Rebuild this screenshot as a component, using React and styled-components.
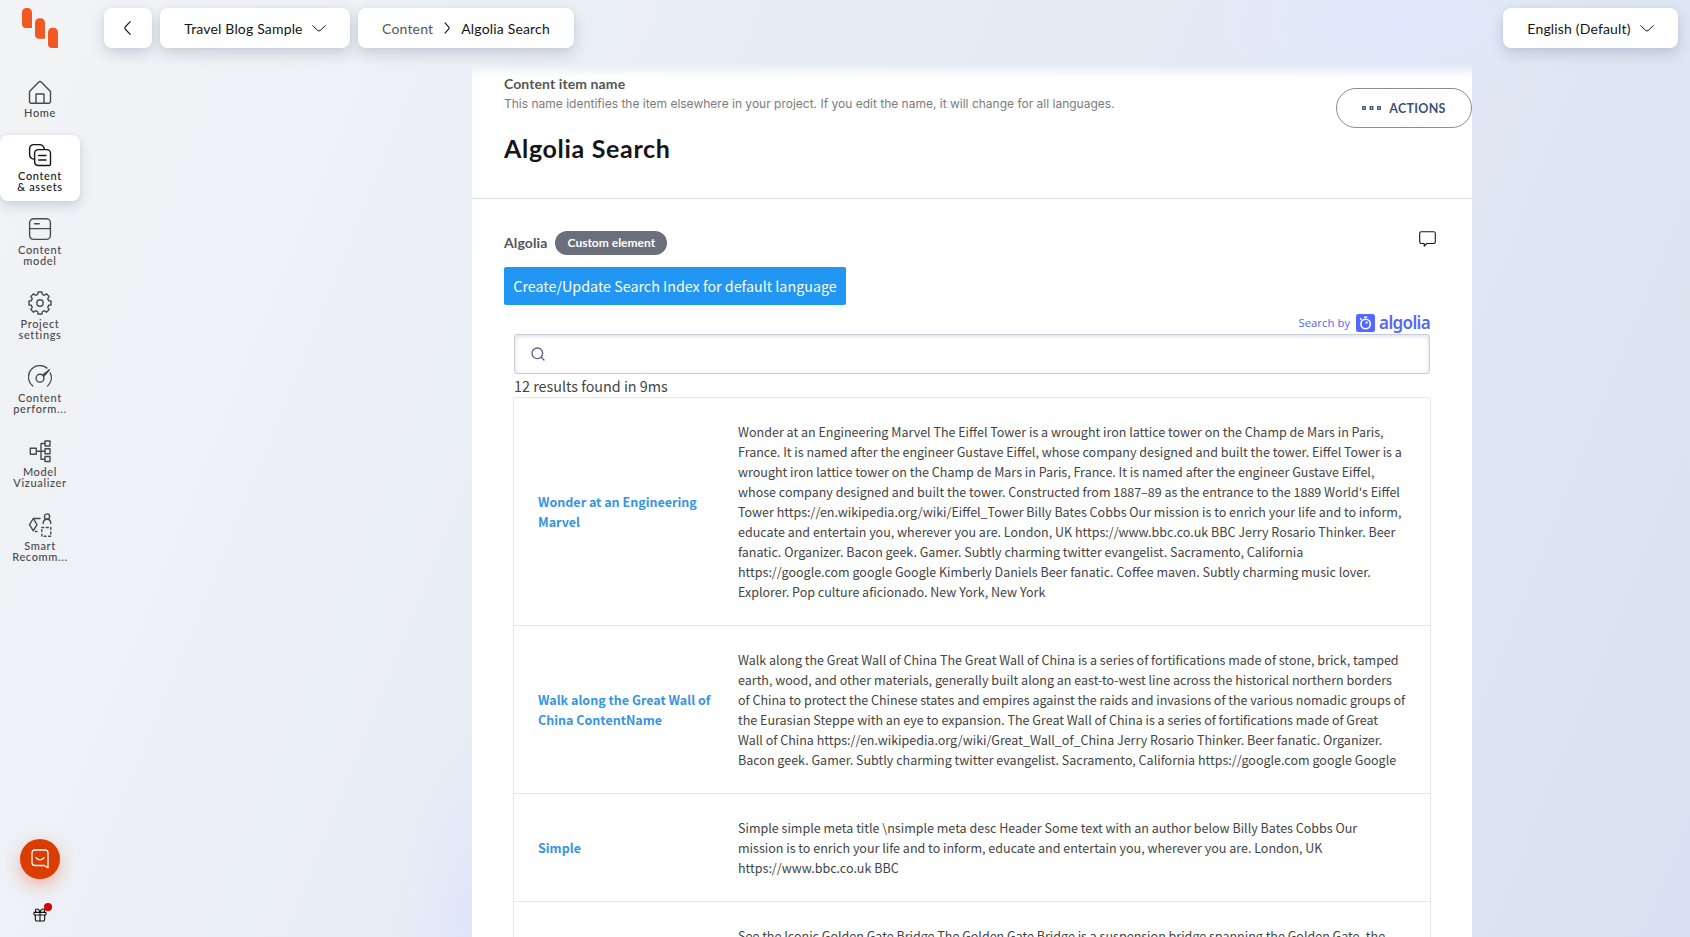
import React from "react";
import styled, { createGlobalStyle, css } from "styled-components";
import { Gift, Search } from "lucide-react";

const brand = `Lato, "Open Sans", sans-serif`;
const source = `"Noto Sans CJK SC", "Open Sans", sans-serif`;

const GlobalStyle = createGlobalStyle`
  *, *::before, *::after { box-sizing: border-box; }
  body { margin: 0; overflow: hidden; font-family: ${brand}; color: #151515; }
  button { font: inherit; color: inherit; border: 0; padding: 0; background: none; }
  h1, h2, p { margin: 0; }
  svg { display: block; flex: none; }
`;

const Page = styled.div`
  display: flex;
  height: 937px;
  overflow: hidden;
  background:
    radial-gradient(ellipse 190px 90px at 1400px 20px, rgba(223, 232, 255, 0.8), rgba(223, 232, 255, 0)),
    radial-gradient(ellipse 70px 190px at 472px 937px, rgba(219, 227, 252, 0.7), rgba(219, 227, 252, 0)),
    linear-gradient(112deg, #f2f4f6 0%, #edf0f5 20%, #e6ebf5 46%, #e1e8f4 72%, #d8e1f1 100%);
`;

/* Sidebar */
const Sidebar = styled.nav`
  display: flex;
  flex-direction: column;
  align-items: center;
  width: 80px;
  flex: none;
  padding: 8px 0 14px;
`;

const NavList = styled.div`
  display: flex;
  flex-direction: column;
  gap: 8px;
  width: 100%;
  margin-top: 24px;
`;

const NavItem = styled.a`
  display: flex;
  flex-direction: column;
  align-items: center;
  gap: 3px;
  width: 80px;
  padding: 8px 0 9px;
  border-radius: 8px;
  color: #4a4a4a;
  font-size: 11px;
  font-weight: 500;
  line-height: 11px;
  letter-spacing: 0.65px;
  text-align: center;
  white-space: pre;
  ${(p) => p.$active && css`
    color: #151515;
    background: #fff;
    box-shadow: 0 5px 12px rgba(60, 75, 110, 0.2), 0 0 3px rgba(60, 75, 110, 0.05);
  `}
`;

const ChatButton = styled.button`
  display: grid;
  place-items: center;
  width: 40px;
  height: 40px;
  margin-top: auto;
  border-radius: 50%;
  color: #fff;
  background: #db3c00;
  box-shadow: 0 6px 16px rgba(240, 90, 40, 0.38);
`;

const GiftButton = styled.button`
  position: relative;
  margin-top: 28px;
  color: #151515;
`;

const Dot = styled.span`
  position: absolute;
  top: -4px;
  right: -4px;
  width: 8px;
  height: 8px;
  border-radius: 50%;
  background: #d60000;
`;

/* Top bar */
const Main = styled.main`
  display: flex;
  flex-direction: column;
  flex: 1;
  min-width: 0;
`;

const TopBar = styled.header`
  display: flex;
  gap: 8px;
  flex: none;
  height: 64px;
  padding: 8px 12px 0 24px;
`;

const Tile = styled.button`
  display: flex;
  align-items: center;
  justify-content: center;
  width: ${(p) => p.$width}px;
  height: 40px;
  margin-left: ${(p) => (p.$end ? "auto" : 0)};
  padding-right: ${(p) => p.$nudge || 0}px;
  gap: 9px;
  border-radius: 8px;
  background: #fff;
  box-shadow: 0 6px 14px rgba(60, 75, 110, 0.2), 0 0 4px rgba(60, 75, 110, 0.05);
  font-size: 14px;
  font-weight: 400;
  letter-spacing: 0.17px;
  white-space: nowrap;
`;

const Crumb = styled.span`
  color: ${(p) => (p.$current ? "#151515" : "#555")};
`;

/* Item panel */
const Panel = styled.section`
  width: 1000px;
  flex: 1;
  margin-left: 392px;
  background: linear-gradient(to bottom, rgba(255, 255, 255, 0) 0, #fff 14px);
`;

const PanelHeader = styled.div`
  display: flex;
  justify-content: space-between;
  align-items: flex-start;
  height: 135px;
  padding: 11px 0 0 32px;
  border-bottom: 1px solid #dcdde3;
`;

const FieldLabel = styled.h2`
  color: #555;
  font-size: 14px;
  font-weight: 700;
  line-height: 18px;
  letter-spacing: 0.1px;
`;

const Hint = styled.p`
  margin-top: 3px;
  color: #7c7c7c;
  font: 12px/16px Inter, sans-serif;
`;

const Title = styled.h1`
  margin-top: 21px;
  font-size: 25px;
  font-weight: 700;
  line-height: 30px;
  letter-spacing: 0.68px;
`;

const ActionsButton = styled.button`
  display: flex;
  align-items: center;
  justify-content: center;
  gap: 8px;
  width: 136px;
  height: 40px;
  margin-top: 13px;
  border: 1px solid #8c8c8c;
  border-radius: 20px;
  color: #3b5178;
  font-size: 12.5px;
  font-weight: 700;
  letter-spacing: 0.3px;
`;

const ElementBody = styled.div`
  display: flex;
  flex-direction: column;
  align-items: flex-start;
  padding: 32px 36px 0 32px;
`;

const ElementHeader = styled.div`
  display: flex;
  width: 100%;
  height: 24px;
  gap: 8px;
`;

const ElementName = styled(FieldLabel)`
  line-height: 24px;
`;

const Pill = styled.span`
  width: 112px;
  border-radius: 12px;
  color: #fff;
  background: #6a6f7b;
  font-size: 12px;
  font-weight: 700;
  line-height: 24px;
  text-align: center;
`;

const CommentButton = styled.button`
  align-self: flex-start;
  margin-left: auto;
`;

const IndexButton = styled.button`
  width: 342px;
  height: 38px;
  margin-top: 12px;
  border-radius: 2px;
  color: #fff;
  background: #2196f3;
  font: 14.3px/38px ${source};
  white-space: nowrap;
`;

const SearchArea = styled.div`
  width: 916px;
  margin: 9px 0 0 10px;
  font-family: ${source};
  color: #444;
`;

const PoweredBy = styled.div`
  display: flex;
  align-items: center;
  justify-content: flex-end;
  height: 20px;
  padding-bottom: 2px;
  color: #5468ef;
  font: 500 11.4px/18px "Open Sans", sans-serif;
`;

const Wordmark = styled.span`
  margin-left: 4px;
  font: 600 17px/18px "Noto Sans", sans-serif;
  letter-spacing: -0.65px;
`;

const BadgeIcon = styled.svg`
  margin-left: 6px;
`;

const SearchBox = styled.div`
  display: flex;
  align-items: center;
  height: 40px;
  padding-left: 15px;
  border: 1px solid #c9ccd9;
  border-radius: 3px;
  color: #5a5e8c;
  background: #fff;
  box-shadow: inset 0 1px 4px rgba(119, 122, 165, 0.28);
`;

const Stats = styled.p`
  height: 24px;
  font-size: 14.35px;
  line-height: 23px;
`;

const Hits = styled.div`
  border-radius: 3px;
  box-shadow: 0 0 0 1px #e4e6f0;
`;

const Hit = styled.article`
  display: grid;
  grid-template-columns: 200px 1fr;
  align-items: center;
  padding: 24px 0 23px 24px;
  border-bottom: 1px solid #e4e8f2;
  font-size: 12.52px;
  line-height: 20px;
  white-space: pre;
`;

const HitTitle = styled.a`
  color: #3594e6;
  font-weight: 700;
`;

const ink = { fill: "none", stroke: "currentColor", strokeWidth: 1.4, strokeLinecap: "round", strokeLinejoin: "round" };

const NavIcon = ({ children }) => (
  <svg width="24" height="24" viewBox="0 0 24 24" {...ink}>{children}</svg>
);

const gearPath = (() => {
  const points = [];
  for (let i = 0; i < 8; i++) {
    [[-15, 8.9], [-10, 11.2], [10, 11.2], [15, 8.9]].forEach(([offset, radius]) => {
      const angle = ((i * 45 + offset) * Math.PI) / 180;
      points.push(`${(12 + radius * Math.cos(angle)).toFixed(2)} ${(12 + radius * Math.sin(angle)).toFixed(2)}`);
    });
  }
  return `M${points.join("L")}Z`;
})();

const navItems = [
  { label: "Home", icon: <><path d="M1.5 11.5 10.3 2.4Q12 .8 13.7 2.4L22.5 11.5V21.5Q22.5 23.2 20.8 23.2H3.2Q1.5 23.2 1.5 21.5Z" /><path d="M8 23V14H16V23" /></> },
  { label: "Content\n& assets", active: true, icon: <><path d="M6.5 16.4Q1.6 15.5 1.6 11.5V6Q1.6 1.6 6 1.6H11.5Q15.6 1.6 16.5 6.4" /><path d="M6.6 10.6Q6.6 6.6 10.6 6.6H18.5Q22.5 6.6 22.5 10.6V21.2Q22.5 22.5 21.2 22.5H10.6Q6.6 22.5 6.6 18.5ZM10.7 12.5H18M10.7 17H18" /></> },
  { label: "Content\nmodel", icon: <><rect x="1.6" y="1.8" width="20.8" height="20.6" rx="4" /><path d="M1.6 11.6H22.4M6.5 6.8H11.3" /></> },
  { label: "Project\nsettings", icon: <><path d={gearPath} /><circle cx="12" cy="12" r="3.2" /></> },
  { label: "Content\nperform...", icon: <><path d="M4.7 20.9A11.2 11.2 0 0 1 19 3.1M22.3 8A11.2 11.2 0 0 1 19.6 20.9" /><circle cx="12" cy="13.2" r="3.9" /><path d="M14.6 10 21.4 4.8 15.8 11.3" /></> },
  { label: "Model\nVizualizer", icon: <><path d="M2.3 9.3H8.3V15.3H2.3ZM8.3 12.3H17M17 4.5H13V20.3H17" /><path d="M17 2H22V7H17ZM17 9.8H22V14.8H17ZM17 17.5H22V22.5H17Z" /></> },
  { label: "Smart\nRecomm...", icon: <><path d="M5.3 5.5 9 11.7 5.3 17.8 1.5 11.7ZM5.3 5.5H12" /><circle cx="19" cy="3.5" r="2.6" /><path d="M15.2 10.5Q15.2 6.3 19 6.3T22.8 10.5" /><path d="M13.8 14.5H22.8V23.3H13.8Z" strokeDasharray="2 2.5" /><path d="M7.5 18.5H11" strokeDasharray="1.5 2" /></> },
];

const ChevronDown = () => (
  <svg width="14" height="7" viewBox="0 0 14 7" {...ink} strokeWidth="1"><path d="M.7.7 5.8 5.5Q7 6.5 8.2 5.5L13.3.7" /></svg>
);

const hits = [
  {
    title: "Wonder at an Engineering\nMarvel",
    text: [
      "Wonder at an Engineering Marvel The Eiffel Tower is a wrought iron lattice tower on the Champ de Mars in Paris,",
      "France. It is named after the engineer Gustave Eiffel, whose company designed and built the tower. Eiffel Tower is a",
      "wrought iron lattice tower on the Champ de Mars in Paris, France. It is named after the engineer Gustave Eiffel,",
      "whose company designed and built the tower. Constructed from 1887–89 as the entrance to the 1889 World's Eiffel",
      "Tower https://en.wikipedia.org/wiki/Eiffel_Tower Billy Bates Cobbs Our mission is to enrich your life and to inform,",
      "educate and entertain you, wherever you are. London, UK https://www.bbc.co.uk BBC Jerry Rosario Thinker. Beer",
      "fanatic. Organizer. Bacon geek. Gamer. Subtly charming twitter evangelist. Sacramento, California",
      "https://google.com google Google Kimberly Daniels Beer fanatic. Coffee maven. Subtly charming music lover.",
      "Explorer. Pop culture aficionado. New York, New York",
    ],
  },
  {
    title: "Walk along the Great Wall of\nChina ContentName",
    text: [
      "Walk along the Great Wall of China The Great Wall of China is a series of fortifications made of stone, brick, tamped",
      "earth, wood, and other materials, generally built along an east-to-west line across the historical northern borders",
      "of China to protect the Chinese states and empires against the raids and invasions of the various nomadic groups of",
      "the Eurasian Steppe with an eye to expansion. The Great Wall of China is a series of fortifications made of Great",
      "Wall of China https://en.wikipedia.org/wiki/Great_Wall_of_China Jerry Rosario Thinker. Beer fanatic. Organizer.",
      "Bacon geek. Gamer. Subtly charming twitter evangelist. Sacramento, California https://google.com google Google",
    ],
  },
  {
    title: "Simple",
    text: [
      "Simple simple meta title \\nsimple meta desc Header Some text with an author below Billy Bates Cobbs Our",
      "mission is to enrich your life and to inform, educate and entertain you, wherever you are. London, UK",
      "https://www.bbc.co.uk BBC",
    ],
  },
  {
    title: "",
    text: ["See the Iconic Golden Gate Bridge The Golden Gate Bridge is a suspension bridge spanning the Golden Gate, the"],
  },
];

export default function App() {
  return (
    <>
      <GlobalStyle />
      <Page>
        <Sidebar>
          <svg width="36" height="40" viewBox="0 0 36 40" fill="#f05a22">
            <path d="M0 4.5a4.5 4.5 0 0 1 4.5-4.5h1A4.5 4.5 0 0 1 10 4.5V20H4a4 4 0 0 1-4-4Z" />
            <path d="M13 14.7a4.5 4.5 0 0 1 4.5-4.5h1a4.5 4.5 0 0 1 4.5 4.5V30.7h-6a4 4 0 0 1-4-4Z" />
            <path d="M26 24.3a4.5 4.5 0 0 1 4.5-4.5h1a4.5 4.5 0 0 1 4.5 4.5V40h-6a4 4 0 0 1-4-4Z" />
          </svg>
          <NavList>
            {navItems.map((item) => (
              <NavItem key={item.label} $active={item.active}>
                <NavIcon>{item.icon}</NavIcon>
                <span>{item.label}</span>
              </NavItem>
            ))}
          </NavList>
          <ChatButton aria-label="Chat">
            <svg width="18" height="20" viewBox="0 0 18 20" {...ink} strokeWidth="1.3">
              <path d="M17 18.7V4Q17 1 14 1H4Q1 1 1 4V13.5Q1 16.5 4 16.5H13.2ZM5 8.7Q9 13 13 8.7" />
            </svg>
          </ChatButton>
          <GiftButton aria-label="News">
            <Gift size={16} strokeWidth={1.7} />
            <Dot />
          </GiftButton>
        </Sidebar>
        <Main>
          <TopBar>
            <Tile $width={48} $nudge={1} aria-label="Back">
              <svg width="7" height="14" viewBox="0 0 7 14" {...ink} strokeWidth="1.1"><path d="M6.2.7 1.2 6Q.5 7 1.2 8L6.2 13.3" /></svg>
            </Tile>
            <Tile $width={190}>Travel Blog Sample <ChevronDown /></Tile>
            <Tile $width={216}>
              <Crumb>Content</Crumb>
              <svg width="10" height="12" viewBox="0 0 10 12" {...ink} strokeWidth="1.1"><path d="M3 .8 7 5.3Q7.5 6 7 6.7L3 11.2" /></svg>
              <Crumb $current>Algolia Search</Crumb>
            </Tile>
            <Tile $width={175} $end>English (Default) <ChevronDown /></Tile>
          </TopBar>
          <Panel>
            <PanelHeader>
              <div>
                <FieldLabel>Content item name</FieldLabel>
                <Hint>This name identifies the item elsewhere in your project. If you edit the name, it will change for all languages.</Hint>
                <Title>Algolia Search</Title>
              </div>
              <ActionsButton>
                <svg width="19" height="4" viewBox="0 0 19 4" fill="none" stroke="currentColor" strokeWidth="1.3">
                  <rect x=".7" y=".7" width="2.6" height="2.6" /><rect x="8.2" y=".7" width="2.6" height="2.6" /><rect x="15.7" y=".7" width="2.6" height="2.6" />
                </svg>
                ACTIONS
              </ActionsButton>
            </PanelHeader>
            <ElementBody>
              <ElementHeader>
                <ElementName>Algolia</ElementName>
                <Pill>Custom element</Pill>
                <CommentButton aria-label="Comment">
                  <svg width="17" height="16" viewBox="0 0 17 16" {...ink} strokeWidth="1.1">
                    <path d="M2.3.7H14.7Q16.3.7 16.3 2.3V10.8Q16.3 12.5 14.7 12.5H8L5.2 15.2V12.5H2.3Q.7 12.5.7 10.8V2.3Q.7.7 2.3.7Z" />
                  </svg>
                </CommentButton>
              </ElementHeader>
              <IndexButton>Create/Update Search Index for default language</IndexButton>
              <SearchArea>
                <PoweredBy>
                  Search by
                  <BadgeIcon width="19" height="18" viewBox="0 0 19 18">
                    <rect width="19" height="18" rx="2.5" fill="#5468ff" />
                    <circle cx="9.6" cy="10" r="4.7" fill="none" stroke="#fff" strokeWidth="1.6" />
                    <path d="M8 3.2H11.2M4.3 5.6 5.4 4.4" stroke="#fff" strokeWidth="1.6" />
                    <path d="M9.6 10V7.2Q11.4 7.2 12.1 8.8Z" fill="#fff" />
                  </BadgeIcon>
                  <Wordmark>algolia</Wordmark>
                </PoweredBy>
                <SearchBox><Search size={16} strokeWidth={2} /></SearchBox>
                <Stats>12 results found in 9ms</Stats>
                <Hits>
                  {hits.map((hit) => (
                    <Hit key={hit.title}>
                      <HitTitle>{hit.title}</HitTitle>
                      <p>{hit.text.join("\n")}</p>
                    </Hit>
                  ))}
                </Hits>
              </SearchArea>
            </ElementBody>
          </Panel>
        </Main>
      </Page>
    </>
  );
}
